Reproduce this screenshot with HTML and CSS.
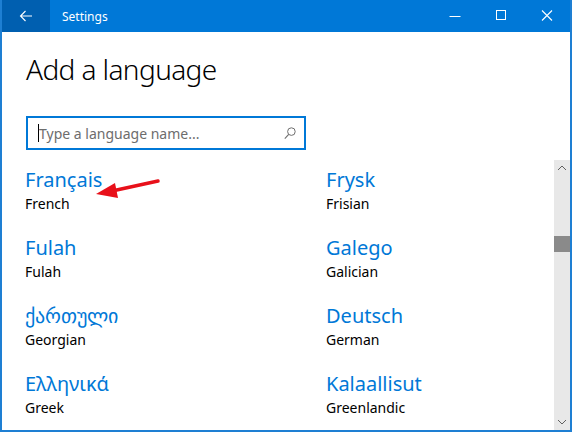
FILE: index.html
```html
<!DOCTYPE html>
<html>
<head>
<meta charset="utf-8">
<link rel="stylesheet" href="styles.css">
</head>
<body>
<div class="window">
  <div class="titlebar">
    <div class="back">
      <svg width="14" height="12" viewBox="0 0 14 12"><path d="M13 6H1.5M6.5 1L1.5 6l5 5" fill="none" stroke="#fff" stroke-width="1.1"/></svg>
    </div>
    <div class="title">Settings</div>
    <div class="controls">
      <div class="ctl"><svg width="12" height="12" viewBox="0 0 12 12"><path d="M0.5 6.5H11.5" stroke="#fff" stroke-width="1"/></svg></div>
      <div class="ctl"><svg width="12" height="12" viewBox="0 0 12 12"><rect x="1.5" y="0.5" width="9" height="9" fill="none" stroke="#fff" stroke-width="1"/></svg></div>
      <div class="ctl"><svg width="12" height="12" viewBox="0 0 12 12"><path d="M1 0.5L11 10.5M11 0.5L1 10.5" stroke="#fff" stroke-width="1.1"/></svg></div>
    </div>
  </div>
  <div class="body">
    <h1 class="heading">Add a language</h1>
    <div class="search">
      <span class="caret"></span>
      <span class="placeholder">Type a language name...</span>
      <svg class="search-icon" width="12" height="13" viewBox="0 0 12 13"><circle cx="7.4" cy="4.6" r="3.8" fill="none" stroke="#6e6e6e" stroke-width="1"/><path d="M4.7 7.3L0.8 11.6" stroke="#6e6e6e" stroke-width="1.1"/></svg>
    </div>
    <div class="listarea">
      <div class="grid">
        <div class="item"><div class="native">Français</div><div class="english">French</div></div>
        <div class="item"><div class="native">Frysk</div><div class="english">Frisian</div></div>
        <div class="item"><div class="native">Fulah</div><div class="english">Fulah</div></div>
        <div class="item"><div class="native">Galego</div><div class="english">Galician</div></div>
        <div class="item"><div class="native">ქართული</div><div class="english">Georgian</div></div>
        <div class="item"><div class="native">Deutsch</div><div class="english">German</div></div>
        <div class="item"><div class="native">Ελληνικά</div><div class="english">Greek</div></div>
        <div class="item"><div class="native">Kalaallisut</div><div class="english">Greenlandic</div></div>
      </div>
      <div class="scrollbar">
        <svg class="arrow" width="10" height="6" viewBox="0 0 10 6"><path d="M1 5L5 1l4 4" fill="none" stroke="#606060" stroke-width="1"/></svg>
        <div class="track"><div class="thumb"></div></div>
        <svg class="arrow" width="10" height="6" viewBox="0 0 10 6"><path d="M1 1l4 4 4-4" fill="none" stroke="#606060" stroke-width="1"/></svg>
      </div>
    </div>
  </div>
  <svg class="annotation" width="572" height="432" viewBox="0 0 572 432">
    <path d="M158 181L112 191" stroke="#e8101a" stroke-width="3.5" stroke-linecap="round"/>
    <polygon points="96,194 115,183 118,198" fill="#e8101a"/>
  </svg>
</div>
</body>
</html>
```
FILE: styles.css
```css
html, body {
  margin: 0;
  padding: 0;
  background: #fff;
}
.window {
  position: relative;
  width: 572px;
  height: 432px;
  box-sizing: border-box;
  border: 2px solid #1e7fd3;
  border-top: 0;
  display: flex;
  flex-direction: column;
  font-family: "Noto Sans", "Open Sans", sans-serif;
  overflow: hidden;
}
.titlebar {
  height: 32px;
  flex: none;
  background: #0078d7;
  display: flex;
  align-items: center;
  color: #fff;
}
.back {
  width: 48px;
  height: 32px;
  background: #005fb0;
  display: flex;
  align-items: center;
  justify-content: center;
}
.title {
  margin-left: 12px;
  font-size: 12px;
  flex: 1;
}
.controls {
  display: flex;
  height: 32px;
}
.ctl {
  width: 46px;
  height: 32px;
  display: flex;
  align-items: center;
  justify-content: center;
}
.body {
  flex: 1;
  display: flex;
  flex-direction: column;
  min-height: 0;
}
.heading {
  margin: 17px 0 0 24px;
  font-size: 28px;
  font-weight: 300;
  line-height: 40px;
  letter-spacing: -0.6px;
  color: #000;
}
.search {
  position: relative;
  margin: 27px 0 0 24px;
  width: 280px;
  height: 34px;
  box-sizing: border-box;
  border: 2px solid #0078d7;
  display: flex;
  align-items: center;
  padding-left: 10px;
}
.caret {
  width: 1px;
  height: 18px;
  background: #000;
}
.placeholder {
  font-size: 14px;
  color: #6d6d6d;
}
.search-icon {
  position: absolute;
  right: 8px;
  top: 9px;
}
.listarea {
  margin-top: 10px;
  flex: 1;
  display: flex;
  min-height: 0;
}
.grid {
  flex: 1;
  display: grid;
  grid-template-columns: 301px 1fr;
  padding: 6px 0 0 23px;
  grid-auto-rows: 68px;
  overflow: hidden;
}
.native {
  font-size: 20px;
  line-height: 28px;
  color: #0078d7;
}
.english {
  font-size: 14px;
  line-height: 19px;
  color: #000;
}
.scrollbar {
  width: 16px;
  flex: none;
  background: #e8e8e8;
  display: flex;
  flex-direction: column;
  align-items: center;
}
.arrow {
  flex: none;
  margin: 5px 0;
}
.track {
  flex: 1;
  width: 100%;
  padding-top: 60px;
}
.thumb {
  height: 16px;
  background: #8a8a8a;
}
.annotation {
  position: absolute;
  left: -2px;
  top: 0;
  pointer-events: none;
}
```
